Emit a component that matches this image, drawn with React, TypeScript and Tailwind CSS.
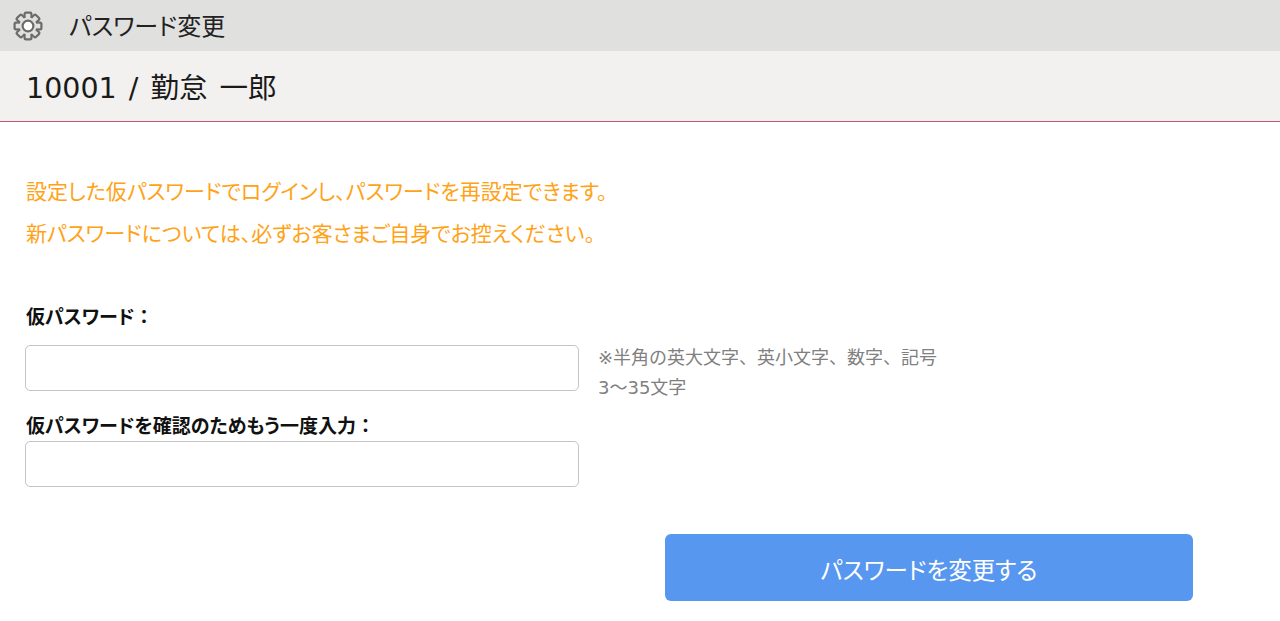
import React from 'react';

const fontStack = "font-['DejaVu_Sans','Noto_Sans_CJK_JP',sans-serif]";

// 歯車アイコン
function GearIcon() {
  const teeth = [0, 45, 90, 135, 180, 225, 270, 315];
  return (
    <svg width="32" height="32" viewBox="0 0 32 32" className="shrink-0">
      <g fill="#e0e0de" stroke="#6b6b6b" strokeWidth="2.2" strokeLinejoin="round">
        {teeth.map((deg) => (
          <rect key={deg} x="12.6" y="2.6" width="6.8" height="6" rx="1.2" transform={`rotate(${deg} 16 16)`} />
        ))}
        <circle cx="16" cy="16" r="9.6" />
      </g>
      <g fill="#e0e0de">
        {teeth.map((deg) => (
          <rect key={deg} x="13.7" y="5" width="4.6" height="6" transform={`rotate(${deg} 16 16)`} />
        ))}
      </g>
      <circle cx="16" cy="16" r="5.4" fill="#ffffff" stroke="#6b6b6b" strokeWidth="2.2" />
    </svg>
  );
}

export default function App() {
  return (
    <div className={`h-[621px] w-[1280px] overflow-hidden bg-white [font-feature-settings:'palt'] ${fontStack}`}>
      {/* ヘッダー */}
      <div className="flex h-[51px] items-center bg-[#e0e0de] pl-3">
        <GearIcon />
        <h1 className="ml-[25px] pt-[2px] text-[24px] font-normal text-[#222222]">パスワード変更</h1>
      </div>

      {/* ユーザー名 */}
      <div className="flex h-[70px] items-center bg-[#f2f1ef] pl-[26px]">
        <p className="pt-[6px] text-[28.5px] [word-spacing:3px] text-[#1a1a1a]">10001 / 勤怠 一郎</p>
      </div>
      <div className="h-px bg-[#c2557f]" />

      <div className="px-[26px] pt-[49px]">
        {/* 案内文 */}
        <div className="text-[21px] leading-[42px] text-[#ffa216]">
          <p>設定した仮パスワードでログインし、パスワードを再設定できます。</p>
          <p>新パスワードについては、必ずお客さまご自身でお控えください。</p>
        </div>

        {/* フォーム */}
        <label className="mt-[48px] block text-[19px] leading-[28px] font-bold text-[#111111]">
          仮パスワード<span className="[font-feature-settings:normal]">：</span>
        </label>
        <div className="mt-[14px] -ml-px flex items-start">
          <input
            type="password"
            className="h-[46px] w-[554px] rounded-[5px] border border-[#c4c4c4] bg-white"
          />
          <p className="ml-[19px] -mt-[2px] text-[18px] leading-[30px] text-[#808080] [font-feature-settings:normal]">
            ※半角の英大文字、英小文字、数字、記号
            <br />
            3〜35文字
          </p>
        </div>
        <label className="mt-[9px] block text-[19px] leading-[28px] font-bold text-[#111111]">
          仮パスワードを確認のためもう一度入力<span className="[font-feature-settings:normal]">：</span>
        </label>
        <input
          type="password"
          className="mt-[1px] -ml-px block h-[46px] w-[554px] rounded-[5px] border border-[#c4c4c4] bg-white"
        />

        {/* 変更ボタン */}
        <div className="mt-[47px] pl-[639px]">
          <button className="h-[67px] w-[528px] rounded-[6px] bg-[#5797f0] pt-2 text-[23.5px] text-white">パスワードを変更する</button>
        </div>
      </div>
    </div>
  );
}
